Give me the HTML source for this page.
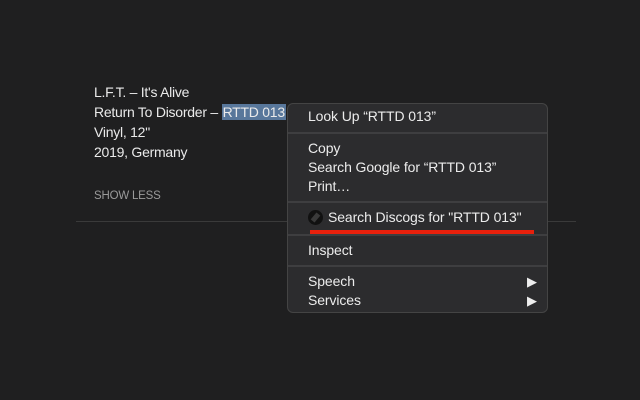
<!DOCTYPE html>
<html><head><style>
body{margin:0;width:640px;height:400px;background:#1f1f20;font-family:"Liberation Sans",sans-serif;position:relative;overflow:hidden;color:#eaeaea}
.l{position:absolute;left:94px;font-size:14px;line-height:20px;white-space:nowrap;letter-spacing:-0.25px}
.sel{background:#58779b;padding:0 1px}
.menu{position:absolute;left:287px;top:103px;width:261px;height:210px;background:#2c2c2e;border:1px solid #444;border-radius:6px;box-sizing:border-box}
.it{position:absolute;left:20px;font-size:14px;line-height:19px;color:#ececec;white-space:nowrap;letter-spacing:-0.1px}
.sep{position:absolute;left:0;right:0;height:2px;background:#3e3e40}
.arr{position:absolute;right:10px;font-size:13px;color:#eee}
</style></head><body>
<div class="l" style="top:82px">L.F.T. – It's Alive</div>
<div class="l" style="top:102px">Return To Disorder – <span class="sel">RTTD 013</span></div>
<div class="l" style="top:122px">Vinyl, 12"</div>
<div class="l" style="top:142px">2019, Germany</div>
<div class="l" style="top:186px;font-size:11.5px;color:#9a9a9a;letter-spacing:-0.2px">SHOW LESS</div>
<div style="position:absolute;left:76px;top:221px;width:500px;height:1px;background:#3a3a3a"></div>
<div class="menu">
<div class="it" style="top:3px">Look Up “RTTD 013”</div>
<div class="sep" style="top:28px"></div>
<div class="it" style="top:35px">Copy</div>
<div class="it" style="top:54px">Search Google for “RTTD 013”</div>
<div class="it" style="top:73px">Print…</div>
<div class="sep" style="top:97px"></div>
<div style="position:absolute;left:20px;top:106px;width:15px;height:15px;border-radius:50%;background:#111"><div style="position:absolute;left:5px;top:3px;width:5px;height:9px;background:#3a3a3a;transform:rotate(40deg)"></div></div>
<div class="it" style="top:104px;left:40px">Search Discogs for "RTTD 013"</div>
<div class="sep" style="top:130px"></div>
<div style="position:absolute;left:22px;top:126px;width:224px;height:4px;background:#e8200c"></div>
<div class="it" style="top:137px">Inspect</div>
<div class="sep" style="top:161px"></div>
<div class="it" style="top:168px">Speech</div><div class="arr" style="top:170px">▶</div>
<div class="it" style="top:187px">Services</div><div class="arr" style="top:189px">▶</div>
</div>
</body></html>
